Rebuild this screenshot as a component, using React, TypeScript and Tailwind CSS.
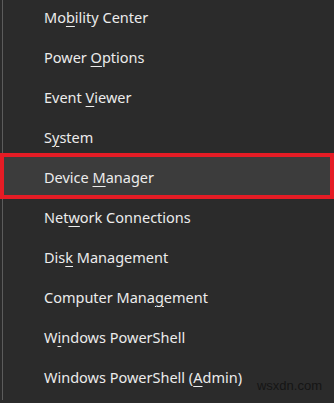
import React from 'react';

interface MenuItem {
  before: string;
  key: string;
  after: string;
  selected?: boolean;
}

const items: MenuItem[] = [
  { before: 'Mo', key: 'b', after: 'ility Center' },
  { before: 'Power ', key: 'O', after: 'ptions' },
  { before: 'Event ', key: 'V', after: 'iewer' },
  { before: 'S', key: 'y', after: 'stem' },
  { before: 'Device ', key: 'M', after: 'anager', selected: true },
  { before: 'Net', key: 'w', after: 'ork Connections' },
  { before: 'Dis', key: 'k', after: ' Management' },
  { before: 'Computer Mana', key: 'g', after: 'ement' },
  { before: 'W', key: 'i', after: 'ndows PowerShell' },
  { before: 'Windows PowerShell (', key: 'A', after: 'dmin)' },
];

export default function App() {
  return (
    <div className="relative w-[334px] h-[403px] overflow-hidden bg-[#2b2b2b]" style={{ fontFamily: '"Noto Sans", "Open Sans", sans-serif' }}>
      <div className="ml-[2px] h-full border-l border-[#5c5c5c]">
        <div className="-mt-[3px] flex flex-col">
          {items.map((item, idx) => (
            <div
              key={idx}
              className={`relative flex h-10 items-center pl-[41px] text-[14.5px] text-[#ececec] ${item.selected ? 'bg-[#3c3c3c]' : ''}`}
            >
              <span className="leading-none">
                {item.before}
                <u className="underline-offset-[3px]">{item.key}</u>
                {item.after}
              </span>
              {item.selected && (
                <div className="pointer-events-none absolute -left-[3px] right-0 -top-[4px] -bottom-[2px] border-[4px] border-[#e51c25]" />
              )}
            </div>
          ))}
        </div>
      </div>
      {/* watermark */}
      <span
        className="absolute right-[12px] bottom-[8px] text-[13px] text-[#151515]"
        style={{ fontFamily: '"Liberation Sans", Arial, sans-serif' }}
      >
        wsxdn.com
      </span>
    </div>
  );
}
